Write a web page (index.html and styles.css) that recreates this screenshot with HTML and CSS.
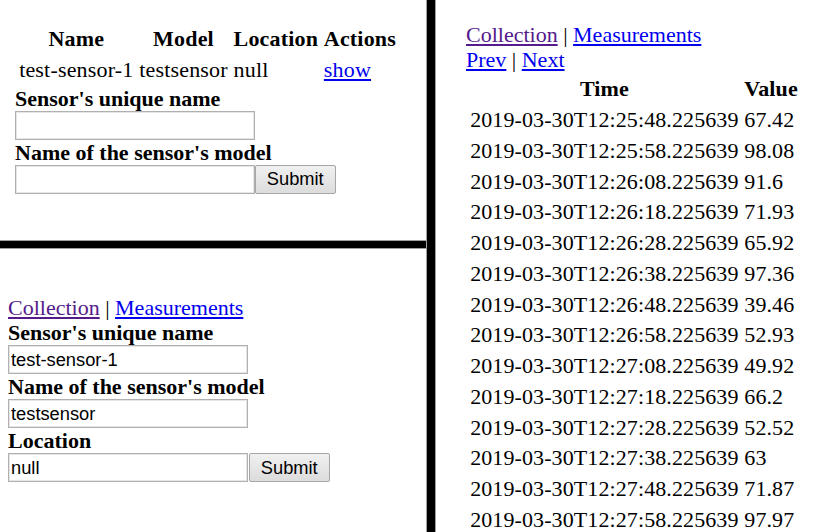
FILE: index.html
```html
<!DOCTYPE html>
<html>
<head>
<meta charset="utf-8">
<title>Sensors</title>
<link rel="stylesheet" href="styles.css">
</head>
<body>
<div class="frames">
  <div class="left">
    <div class="pane pane-top">
      <table class="grid grid-sensors">
        <tr><th>Name</th><th>Model</th><th>Location</th><th>Actions</th></tr>
        <tr><td>test-sensor-1</td><td>testsensor</td><td>null</td><td><a href="#">show</a></td></tr>
      </table>
      <form class="form">
        <label class="label">Sensor's unique name</label>
        <div class="row"><input class="field" type="text"></div>
        <label class="label">Name of the sensor's model</label>
        <div class="row"><input class="field" type="text"><button class="btn" type="button">Submit</button></div>
      </form>
    </div>
    <div class="hbar"></div>
    <div class="pane pane-bottom">
      <div class="nav"><a class="visited" href="#">Collection</a> | <a href="#">Measurements</a></div>
      <form class="form">
        <label class="label">Sensor's unique name</label>
        <div class="row"><input class="field" type="text" value="test-sensor-1"></div>
        <label class="label">Name of the sensor's model</label>
        <div class="row"><input class="field" type="text" value="testsensor"></div>
        <label class="label">Location</label>
        <div class="row"><input class="field" type="text" value="null"><button class="btn btn-gap" type="button">Submit</button></div>
      </form>
    </div>
  </div>
  <div class="vbar"></div>
  <div class="pane pane-right">
    <div class="nav"><a class="visited" href="#">Collection</a> | <a href="#">Measurements</a></div>
    <div class="nav"><a href="#">Prev</a> | <a href="#">Next</a></div>
    <table class="grid grid-values">
      <tr><th>Time</th><th>Value</th></tr>
      <tr><td>2019-03-30T12:25:48.225639</td><td>67.42</td></tr>
      <tr><td>2019-03-30T12:25:58.225639</td><td>98.08</td></tr>
      <tr><td>2019-03-30T12:26:08.225639</td><td>91.6</td></tr>
      <tr><td>2019-03-30T12:26:18.225639</td><td>71.93</td></tr>
      <tr><td>2019-03-30T12:26:28.225639</td><td>65.92</td></tr>
      <tr><td>2019-03-30T12:26:38.225639</td><td>97.36</td></tr>
      <tr><td>2019-03-30T12:26:48.225639</td><td>39.46</td></tr>
      <tr><td>2019-03-30T12:26:58.225639</td><td>52.93</td></tr>
      <tr><td>2019-03-30T12:27:08.225639</td><td>49.92</td></tr>
      <tr><td>2019-03-30T12:27:18.225639</td><td>66.2</td></tr>
      <tr><td>2019-03-30T12:27:28.225639</td><td>52.52</td></tr>
      <tr><td>2019-03-30T12:27:38.225639</td><td>63</td></tr>
      <tr><td>2019-03-30T12:27:48.225639</td><td>71.87</td></tr>
      <tr><td>2019-03-30T12:27:58.225639</td><td>97.97</td></tr>
    </table>
  </div>
</div>
</body>
</html>
```

FILE: styles.css
```css
html, body {
  margin: 0;
  padding: 0;
  background: #ffffff;
}
body {
  font-family: "Liberation Serif", "Times New Roman", serif;
  font-size: 22px;
  line-height: 25px;
  color: #000000;
}
.frames {
  display: grid;
  grid-template-columns: 426px 10px 1fr;
  height: 532px;
  overflow: hidden;
}
.left {
  display: flex;
  flex-direction: column;
  height: 532px;
}
.pane {
  background: #ffffff;
  overflow: hidden;
  box-sizing: border-box;
}
.pane-top {
  height: 240px;
  padding: 22px 0 0 15px;
}
.hbar {
  height: 9px;
  box-sizing: border-box;
  background: #000000;
  border-top: 1px solid #a0a0a0;
  border-bottom: 1px solid #a0a0a0;
}
.pane-bottom {
  flex: 1;
  padding: 46px 0 0 8px;
}
.vbar {
  background: #000000;
  border-left: 1px solid #a0a0a0;
  border-right: 1px solid #a0a0a0;
}
.pane-right {
  height: 532px;
  padding: 22px 0 0 30px;
}
a {
  color: #0000ee;
  text-decoration: underline;
}
a.visited {
  color: #551a8b;
}
.grid {
  border-collapse: separate;
  border-spacing: 3px;
  margin: 0 0 0 -0.25px;
}
.grid-sensors {
  letter-spacing: 0.18px;
  margin-bottom: -1px;
}
.grid-values {
  letter-spacing: 0.1px;
}
.grid th, .grid td {
  padding: 1.375px;
  line-height: 25px;
  white-space: nowrap;
}
.grid th {
  font-weight: bold;
  text-align: center;
}
.grid td {
  text-align: left;
}
.form {
  margin: 0;
  display: flex;
  flex-direction: column;
  align-items: flex-start;
}
.label {
  display: block;
  font-weight: bold;
  line-height: 25px;
}
.row {
  display: flex;
  align-items: stretch;
  height: 29px;
}
.field {
  width: 240px;
  height: 29px;
  box-sizing: border-box;
  margin: 0;
  padding: 0 2px;
  border: 1px solid #b0b0b0;
  box-shadow: inset 0 0 0 1px #e6e6e6;
  font-family: "Liberation Sans", Arial, sans-serif;
  font-size: 18.3px;
  color: #000000;
  background: #ffffff;
}
.btn {
  height: 29px;
  box-sizing: border-box;
  margin: 0;
  padding: 0 10.8px;
  border: 1px solid #a6a6a6;
  border-radius: 2px;
  background: linear-gradient(#f0f0f0, #dcdcdc);
  font-family: "Liberation Sans", Arial, sans-serif;
  font-size: 18.3px;
  color: #000000;
}
.btn-gap {
  margin-left: 1px;
}
```
